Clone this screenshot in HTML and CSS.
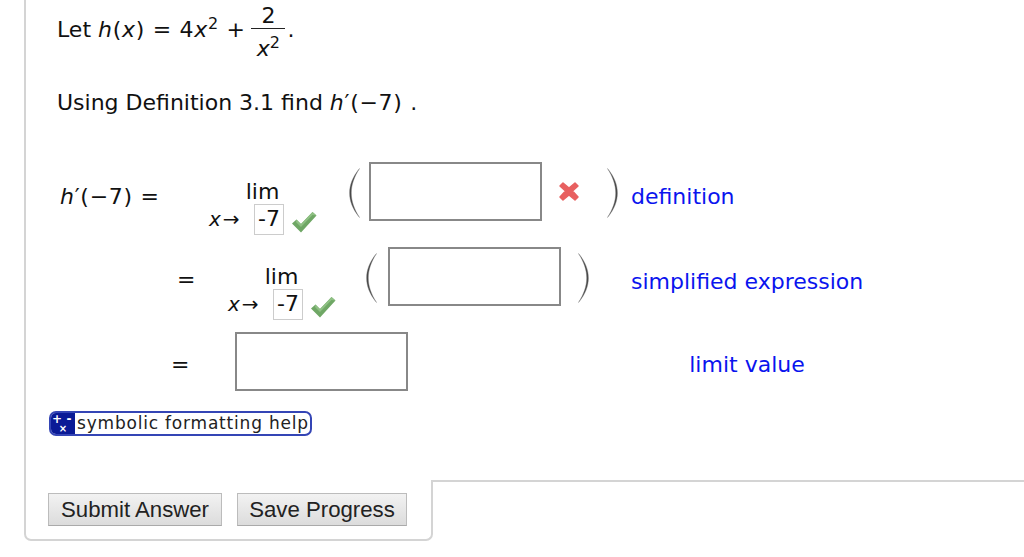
FILE: index.html
```html
<!DOCTYPE html>
<html lang="en">
<head>
<meta charset="utf-8">
<title>Derivative by definition</title>
<link rel="stylesheet" href="styles.css">
</head>
<body>
<main class="card">
  <section class="content">
    <p class="line first">Let <span class="math"><i>h</i>(<i>x</i>) = 4<i>x</i><sup>2</sup> + </span><span class="frac"><span class="num">2</span><span class="den"><i>x</i><sup>2</sup></span></span><span class="dot">.</span></p>
    <p class="line second">Using Definition 3.1 find <span class="math"><i>h</i>′(−7) .</span></p>

    <div class="rows">
      <div class="row">
        <div class="work">
          <div class="lhs lhs-one math"><i>h</i>′(−7) =</div>
          <div class="limit">
            <div class="lim">lim</div>
            <div class="sub"><i>x</i><span class="arrow">→</span><span class="to">-7</span>
              <svg class="check" viewBox="0 0 26 22" width="26" height="22"><path d="M1 12.5 L5.5 8.5 L10 13 L21.5 1 L25.5 4.5 L10 21.5 Z" fill="#6fa765"/><path d="M5.5 8.5 L10 13 L21.5 1 L25.5 4.5 L21.5 4 L10 16 L5 11 Z" fill="#8fc084"/></svg>
            </div>
          </div>
          <svg class="paren paren-l" viewBox="0 0 12 50" width="12" height="50"><path d="M10.500 .5 C3.500 9 .6 17 .6 25 C.6 33 3.500 41 10.500 49.500 C5 41 2.300 33 2.300 25 C2.300 17 5 9 10.500 .5 Z" fill="#444" stroke="#777" stroke-width=".4"/></svg>
          <div class="box"></div>
          <svg class="cross" viewBox="0 0 24 24" width="24" height="24"><path d="M6 4 L12 9 L18 4 L21 7 L15.500 12 L21 18 L18 21 L12 16 L6 21 L3 18 L8.500 12 L3 7 Z" fill="#e86060" stroke="#e86060" stroke-width="1.500" stroke-linejoin="round"/></svg>
          <svg class="paren paren-r" viewBox="0 0 12 50" width="12" height="50"><path d="M1.500 .5 C8.500 9 11.400 17 11.400 25 C11.400 33 8.500 41 1.500 49.500 C7 41 9.700 33 9.700 25 C9.700 17 7 9 1.500 .5 Z" fill="#444" stroke="#777" stroke-width=".4"/></svg>
        </div>
        <div class="note">definition</div>
      </div>

      <div class="row">
        <div class="work">
          <div class="lhs lhs-two">=</div>
          <div class="limit">
            <div class="lim">lim</div>
            <div class="sub"><i>x</i><span class="arrow">→</span><span class="to">-7</span>
              <svg class="check" viewBox="0 0 26 22" width="26" height="22"><path d="M1 12.5 L5.5 8.5 L10 13 L21.5 1 L25.5 4.500 L10 21.500 Z" fill="#6fa765"/><path d="M5.500 8.500 L10 13 L21.500 1 L25.500 4.500 L21.500 4 L10 16 L5 11 Z" fill="#8fc084"/></svg>
            </div>
          </div>
          <svg class="paren paren-l2" viewBox="0 0 12 50" width="12" height="50"><path d="M10.500 .5 C3.500 9 .6 17 .6 25 C.6 33 3.500 41 10.500 49.500 C5 41 2.300 33 2.300 25 C2.300 17 5 9 10.500 .5 Z" fill="#444" stroke="#777" stroke-width=".4"/></svg>
          <div class="box"></div>
          <svg class="paren paren-r2" viewBox="0 0 12 50" width="12" height="50"><path d="M1.500 .5 C8.500 9 11.400 17 11.400 25 C11.400 33 8.500 41 1.500 49.500 C7 41 9.700 33 9.700 25 C9.700 17 7 9 1.500 .5 Z" fill="#444" stroke="#777" stroke-width=".4"/></svg>
        </div>
        <div class="note">simplified expression</div>
      </div>

      <div class="row">
        <div class="work">
          <div class="lhs lhs-three">=</div>
          <div class="box"></div>
        </div>
        <div class="note note-center">limit value</div>
      </div>
    </div>

    <a class="help" href="#"><span class="help-icon"><span>+</span><span>-</span><span class="times">×</span></span><span class="help-text">symbolic formatting help</span></a>
  </section>

  <footer class="foot">
    <div class="actions">
      <button class="btn btn-submit" type="button">Submit Answer</button>
      <button class="btn btn-save" type="button">Save Progress</button>
    </div>
    <div class="foot-rest"></div>
  </footer>
</main>
</body>
</html>
```
FILE: styles.css
```css
* { box-sizing: border-box; }
html, body { margin: 0; height: 100%; background: #fff; }
body { font-family: "DejaVu Sans", Verdana, sans-serif; font-size: 22px; color: #111; overflow: hidden; }

.card { margin-left: 24px; width: 1000px; }
.content { border-left: 2px solid #d4d4d4; height: 480px; padding-left: 31px; }

.line { margin: 0; white-space: nowrap; }
.math { letter-spacing: .7px; }
.first { height: 60px; line-height: 60px; }
.first sup, .den sup { font-size: 16px; line-height: 0; vertical-align: 8px; }
.second { margin-top: 28px; line-height: 30px; }
.frac { display: inline-flex; flex-direction: column; align-items: center; width: 34px; margin: -4px 0 0 -2px; vertical-align: middle; line-height: normal; }
.num { line-height: 25px; border-bottom: 1.500px solid #222; width: 100%; text-align: center; }
.den { line-height: 27px; margin: 6px 0 -6px; }
.dot { margin-left: 2px; }

.rows { margin-top: 44px; display: flex; flex-direction: column; gap: 27px; }
.row { display: flex; height: 58px; align-items: center; }
.work { width: 574px; height: 58px; display: flex; align-items: center; }
.lhs { white-space: nowrap; }
.lhs-one { width: 152px; padding: 10px 0 0 3px; }
.lhs-two { width: 171px; padding: 6px 0 0 120px; }
.lhs-three { width: 178px; padding: 6px 0 0 114px; }

.limit { width: 108px; display: flex; flex-direction: column; align-items: center; align-self: flex-start; margin-top: 18px; }
.lim { line-height: 24px; margin-left: -1px; }
.sub { display: flex; align-items: center; font-size: 20px; height: 30px; width: 108px; }
.arrow { margin-left: 2px; width: 32px; }
.to { width: 30px; height: 31px; border: 1px solid #ccc; text-align: center; line-height: 27px; font-size: 22px; flex: none; }
.check { margin-left: 7px; margin-top: 6px; flex: none; }

.paren { flex: none; margin-top: 4px; }
.paren-l { margin: 4px 8px 0 32px; flex: none; }
.paren-l2 { margin: 4px 10px 0 30px; flex: none; }
.box { width: 173px; height: 59px; border: 2px solid #888; flex: none; background: #fff; }
.cross { margin-left: 15px; flex: none; }
.paren-r { margin: 4px 0 0 25px; flex: none; }
.paren-r2 { margin: 4px 0 0 16px; flex: none; }

.note { color: #0a14ee; width: 232px; white-space: nowrap; padding-top: 10px; }
.note-center { text-align: center; padding-top: 6px; }

.help { display: inline-flex; margin-top: 21px; margin-left: -8px; height: 25px; width: 263px; border: 2px solid #3445b5; border-radius: 7px; overflow: hidden; color: #222; text-decoration: none; font-size: 17px; align-items: center; }
.help-icon { width: 24px; height: 100%; background: #0a1a96; color: #fff; font-size: 12px; font-weight: 700; display: grid; grid-template-columns: 1fr 1fr; grid-auto-rows: 10px; line-height: 10px; flex: none; text-align: center; padding-top: 1px; overflow: hidden; }
.times { grid-column: 1 / 3; font-size: 10px; }
.help-text { margin: -2px 0 0 2px; letter-spacing: .8px; white-space: nowrap; line-height: 20px; }

.foot { display: flex; height: 61px; }
.actions { width: 409px; height: 61px; border: 2px solid #d4d4d4; border-top: 0; border-radius: 0 0 7px 7px; padding: 13px 0 0 22px; display: flex; gap: 15px; align-items: flex-start; }
.foot-rest { flex: 1; border-top: 2px solid #d4d4d4; margin-left: -2px; }
.btn { font-family: "Liberation Sans", Arial, sans-serif; font-size: 22.200px; height: 33px; padding: 0; color: #222; background: linear-gradient(#f2f2f2, #dcdcdc); border: 1px solid #bcbcbc; border-bottom-color: #aaa; border-radius: 0; }
.btn-submit { width: 174px; }
.btn-save { width: 170px; }
```
